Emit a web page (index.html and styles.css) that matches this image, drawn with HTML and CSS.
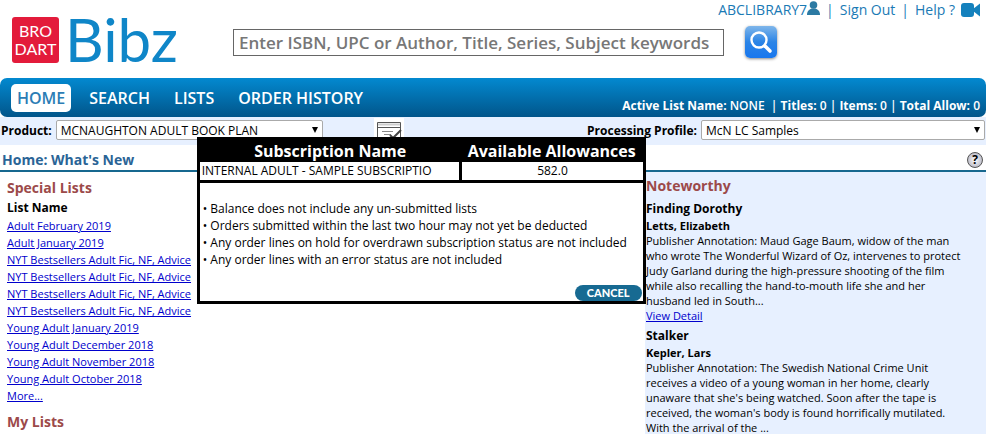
FILE: index.html
```html
<!DOCTYPE html>
<html lang="en">

<head>
    <meta charset="UTF-8">
    <meta name="viewport" content="width=device-width, initial-scale=1.0">
    <link rel="stylesheet" href="styles.css">
    <title>Bibz - What's New</title>
</head>

<body>
    <header class="top">
        <div class="logo">
            <div class="logo-box">
                <span>BRO</span>
                <span>DART</span>
            </div>
            <span class="logo-name">Bibz</span>
        </div>
        <form class="search">
            <input type="text" class="search-input" aria-label="Search"
                placeholder="Enter ISBN, UPC or Author, Title, Series, Subject keywords">
            <button type="button" class="search-btn" aria-label="Search">
                <svg width="24" height="24" viewBox="0 0 24 24">
                    <circle cx="10" cy="10" r="7.500" fill="none" stroke="white" stroke-width="2.4" />
                    <path d="M16 16L21 21" stroke="white" stroke-width="3.600" stroke-linecap="round" />
                </svg>
            </button>
        </form>
        <div class="account">
            <a href="#">ABCLIBRARY7<svg class="user-icon" width="13" height="14" viewBox="0 0 13 14">
                    <circle cx="6.5" cy="4" r="3.8" fill="#2c7aa3" />
                    <path d="M0 14C0 10 2 8.500 4.500 7.500L8.500 7.500C11 8.500 13 10 13 14Z" fill="#2c7aa3" />
                </svg></a>
            <span>|</span>
            <a href="#">Sign Out</a>
            <span>|</span>
            <a href="#" class="help-link">Help ?</a>
            <svg class="video-icon" width="19" height="14" viewBox="0 0 19 14">
                <rect x="0" y="0" width="13" height="14" rx="3" fill="#1481bd" />
                <path d="M12 6L19 0.500V13.500L12 8Z" fill="#1481bd" />
            </svg>
        </div>
    </header>

    <nav class="nav">
        <a href="#" class="nav-link active">HOME</a>
        <a href="#" class="nav-link">SEARCH</a>
        <a href="#" class="nav-link">LISTS</a>
        <a href="#" class="nav-link">ORDER HISTORY</a>
        <div class="status">
            <b>Active List Name:</b> NONE &nbsp;| <b>Titles:</b> 0 | <b>Items:</b> 0 | <b>Total Allow:</b> 0
        </div>
    </nav>

    <div class="filters">
        <label for="product">Product:</label>
        <span class="select-wrap product">
            <select id="product">
                <option>MCNAUGHTON ADULT BOOK PLAN</option>
            </select>
        </span>
        <div class="balance">
            <button type="button" class="balance-btn" aria-label="Show allowances">
                <svg width="30" height="24" viewBox="0 0 30 24">
                    <rect width="30" height="24" fill="white" />
                    <path d="M3.500 24V4.500H26.500V24M3.500 9.500H26.500" fill="none" stroke="#555" />
                    <path d="M4 6.500H26" stroke="#ccc" stroke-width="2" />
                    <path d="M8 13.500H19M10 16.500H17M8 19.500H15" stroke="#888" />
                    <path d="M16 17L19 20L27 12" fill="none" stroke="#444" stroke-width="2" />
                </svg>
            </button>
            <div class="popup" role="dialog" aria-label="Available allowances">
                <table>
                    <thead>
                        <tr>
                            <th class="name-col">Subscription Name</th>
                            <th>Available Allowances</th>
                        </tr>
                    </thead>
                    <tbody>
                        <tr>
                            <td>INTERNAL ADULT - SAMPLE SUBSCRIPTIO</td>
                            <td class="amount">582.0</td>
                        </tr>
                    </tbody>
                </table>
                <div class="popup-notes">
                    <p>&bull; Balance does not include any un-submitted lists</p>
                    <p>&bull; Orders submitted within the last two hour may not yet be deducted</p>
                    <p>&bull; Any order lines on hold for overdrawn subscription status are not included</p>
                    <p>&bull; Any order lines with an error status are not included</p>
                </div>
                <button type="button" class="cancel-btn">CANCEL</button>
            </div>
        </div>
        <label for="profile" class="profile-label">Processing Profile:</label>
        <span class="select-wrap profile">
            <select id="profile">
                <option>McN LC Samples</option>
            </select>
        </span>
    </div>

    <div class="page-title">
        <h1>Home: What's New</h1>
        <button type="button" class="help-btn" aria-label="Help">?</button>
    </div>

    <main class="content">
        <section class="lists">
            <h2>Special Lists</h2>
            <h3>List Name</h3>
            <ul>
                <li><a href="#">Adult February 2019</a></li>
                <li><a href="#">Adult January 2019</a></li>
                <li><a href="#">NYT Bestsellers Adult Fic, NF, Advice</a></li>
                <li><a href="#">NYT Bestsellers Adult Fic, NF, Advice</a></li>
                <li><a href="#">NYT Bestsellers Adult Fic, NF, Advice</a></li>
                <li><a href="#">NYT Bestsellers Adult Fic, NF, Advice</a></li>
                <li><a href="#">Young Adult January 2019</a></li>
                <li><a href="#">Young Adult December 2018</a></li>
                <li><a href="#">Young Adult November 2018</a></li>
                <li><a href="#">Young Adult October 2018</a></li>
                <li><a href="#">More...</a></li>
            </ul>
            <h2>My Lists</h2>
        </section>
        <aside class="noteworthy">
            <h2>Noteworthy</h2>
            <article>
                <h3>Finding Dorothy</h3>
                <h4>Letts, Elizabeth</h4>
                <p>Publisher Annotation: Maud Gage Baum, widow of the man who wrote The Wonderful Wizard of Oz,
                    intervenes to protect Judy Garland during the high-pressure shooting of the film while also
                    recalling the hand-to-mouth life she and her husband led in South...</p>
                <a href="#">View Detail</a>
            </article>
            <article>
                <h3>Stalker</h3>
                <h4>Kepler, Lars</h4>
                <p>Publisher Annotation: The Swedish National Crime Unit receives a video of a young woman in her
                    home, clearly unaware that she's being watched. Soon after the tape is received, the woman's
                    body is found horrifically mutilated. With the arrival of the ...</p>
            </article>
        </aside>
    </main>
</body>

</html>
```

FILE: styles.css
```css
* {
    box-sizing: border-box;
}

body {
    margin: 0;
    font-family: "Open Sans", sans-serif;
    font-size: 11px;
    line-height: 15px;
    color: black;
    background-color: white;
}

h1, h2, h3, h4, p, ul {
    margin: 0;
    padding: 0;
}

button, input, select {
    font-family: inherit;
}

a {
    color: #0000cc;
}

/* header */
.top {
    position: relative;
    display: flex;
    align-items: flex-start;
    height: 78px;
    padding: 17px 12px 0;
}

.logo {
    display: flex;
    width: 221px;
}

.logo-box {
    display: flex;
    flex-direction: column;
    align-items: center;
    justify-content: center;
    width: 47px;
    height: 46px;
    border-radius: 3px;
    background-color: #e31b3b;
    color: white;
    font-family: "Liberation Sans Narrow", Lato, sans-serif;
    font-size: 16px;
    line-height: 18px;
}

.logo-name {
    margin-left: 6px;
    font-family: Lato, sans-serif;
    font-size: 60px;
    line-height: 44px;
    color: #0f86c8;
}

.search {
    display: flex;
    align-items: center;
    padding-top: 9px;
}

.search-input {
    width: 491px;
    height: 27px;
    padding: 0 5px;
    border: 1px solid #666;
    font-size: 17px;
    font-weight: 600;
}

.search-input::placeholder {
    color: #777;
}

.search-btn {
    display: flex;
    align-items: center;
    justify-content: center;
    width: 32px;
    height: 32px;
    margin-left: 21px;
    padding: 0;
    border: 0;
    border-radius: 5px;
    background: linear-gradient(#7fb6ea, #2b84e6 50%, #1877ee);
    box-shadow: 0 1px 3px #888;
}

.account {
    position: absolute;
    top: 0;
    right: 6px;
    display: flex;
    gap: 6px;
    font-size: 14px;
    line-height: 20px;
    color: #1a7ab5;
}

.account a {
    color: #1a7ab5;
    text-decoration: none;
}

.video-icon {
    margin-top: 3px;
}

/* navigation */
.nav {
    display: flex;
    align-items: center;
    height: 39px;
    padding: 0 6px 0 11px;
    border-radius: 7px;
    background: linear-gradient(#0389d0, #01558a);
    color: white;
}

.nav-link {
    margin-right: 12px;
    padding: 0 6px;
    border-radius: 5px;
    font-size: 16px;
    font-weight: 600;
    line-height: 28px;
    color: white;
    text-decoration: none;
}

.nav-link.active {
    background-color: white;
    color: #2c7db5;
}

.status {
    align-self: flex-end;
    margin-left: auto;
    padding-bottom: 3px;
    font-size: 12px;
    font-weight: 600;
    line-height: 16px;
}

.status b {
    font-weight: 700;
}

/* product and profile */
.filters {
    display: flex;
    align-items: center;
    height: 28px;
    padding: 0 1px 2px;
    background-color: #e7f0ff;
}

.filters label {
    font-size: 12px;
    font-weight: bold;
}

.select-wrap {
    position: relative;
    margin-left: 4px;
}

.select-wrap::after {
    content: "";
    position: absolute;
    top: 7px;
    right: 5px;
    border: 3px solid transparent;
    border-top: 6px solid black;
    pointer-events: none;
}

.select-wrap select {
    width: 100%;
    height: 20px;
    padding: 0 4px;
    border: 1px solid #aaa;
    border-radius: 2px;
    background-color: white;
    font-size: 12px;
    appearance: none;
}

.product {
    width: 267px;
}

.profile {
    width: 284px;
}

.profile-label {
    margin-left: auto;
}

.balance {
    position: relative;
    margin-left: 51px;
}

.balance-btn {
    display: block;
    padding: 0;
    border: 0;
    background: none;
}

.balance-btn svg {
    display: block;
}

/* allowances popup */
.popup {
    position: absolute;
    top: 19px;
    left: -177px;
    z-index: 1;
    width: 449px;
    border: 3px solid black;
    background-color: white;
}

.popup table {
    width: 100%;
    border-collapse: collapse;
    border-bottom: 3px solid black;
}

.popup th {
    padding: 1px 0;
    background-color: black;
    color: white;
    font-size: 16px;
    line-height: 20px;
}

.popup td {
    padding: 0 2px;
    font-size: 12px;
    line-height: 18px;
}

.name-col {
    width: 261px;
}

.popup .amount {
    border-left: 3px solid black;
    text-align: center;
}

.popup-notes {
    padding: 17px 0 17px 3px;
    font-size: 12px;
    line-height: 17px;
    white-space: nowrap;
}

.cancel-btn {
    display: block;
    width: 67px;
    height: 16px;
    margin-left: auto;
    margin-right: 1px;
    padding: 0;
    border: 0;
    border-radius: 8px;
    background-color: #176a92;
    color: white;
    font-family: Lato, sans-serif;
    font-size: 11px;
    font-weight: 900;
    line-height: 16px;
}

/* page title */
.page-title {
    display: flex;
    align-items: center;
    justify-content: space-between;
    height: 27px;
    padding: 5px 3px 0 2px;
    border-bottom: 2px solid #17688f;
}

.page-title h1 {
    font-size: 14px;
    line-height: 18px;
    color: #2a6496;
}

.help-btn {
    width: 16px;
    height: 16px;
    padding: 0;
    border: 1px solid #555;
    border-radius: 50%;
    background: radial-gradient(white, #a5a5b5);
    font-size: 12px;
    font-weight: bold;
    line-height: 14px;
}

/* content */
.content {
    display: flex;
    justify-content: space-between;
}

.content h2 {
    font-size: 14px;
    line-height: 20px;
    color: #9c4a4a;
}

.lists {
    width: 197px;
    padding: 6px 0 0 7px;
    overflow: hidden;
    line-height: 17px;
    white-space: nowrap;
}

.lists h3 {
    font-size: 12px;
    line-height: 19px;
}

.lists ul {
    margin-bottom: 8px;
    list-style: none;
}

.noteworthy {
    width: 341px;
    padding: 4px 20px 0 1px;
    background-color: #e7f0ff;
}

.noteworthy h3 {
    padding-top: 4px;
    font-size: 12px;
    line-height: 18px;
}

.noteworthy h4 {
    font-size: 11px;
    line-height: 15px;
}
```
